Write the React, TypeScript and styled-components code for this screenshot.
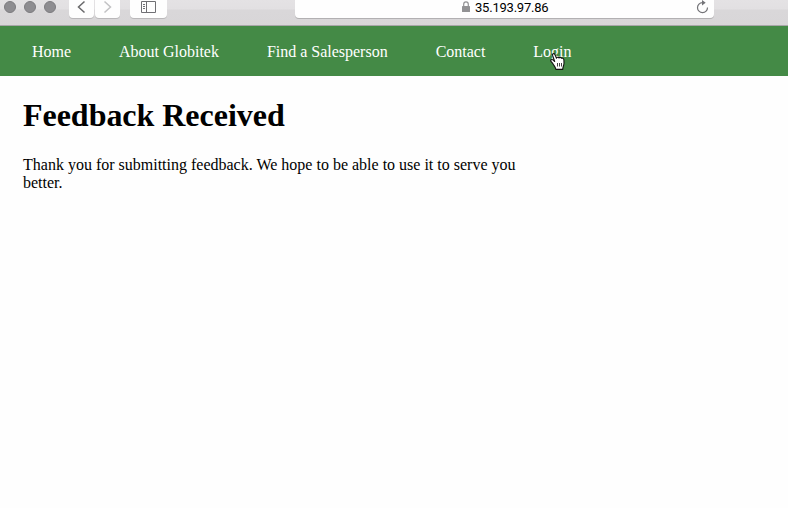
import React from "react";
import styled, { createGlobalStyle } from "styled-components";

const GlobalStyle = createGlobalStyle`
  * { box-sizing: border-box; }
  html, body { margin: 0; background: #fefefe; overflow: hidden; }
`;

const Page = styled.div`
  height: 508px;
  overflow: hidden;
  background: #fefefe;
  color: #000;
  font: 16px/18px "Liberation Serif", "Times New Roman", serif;
`;

const Toolbar = styled.header`
  display: flex;
  align-items: flex-start;
  height: 26px;
  padding-left: 4px;
  background: linear-gradient(#e4e2e4 0, #e2e0e2 9px, #d9d7d9 10px, #d8d6d8 100%);
  border-bottom: 1px solid #a8a6a8;
`;

const WindowButtons = styled.div`
  display: flex;
  gap: 8px;
  padding-top: 1px;
  margin-right: 13px;
`;

const WindowButton = styled.span`
  width: 12px;
  height: 12px;
  border-radius: 50%;
  background: #8e8d91;
  border: 1px solid #7c7b7f;
`;

const ToolButton = styled.button<{ $width: number; $gap: number }>`
  display: block;
  width: ${(p) => p.$width}px;
  height: 18px;
  margin: 0 ${(p) => p.$gap}px 0 0;
  padding: 0;
  border: 0;
  border-radius: 0 0 4px 4px;
  background: #fefefe;
  box-shadow: 0 1px 0 #bab8ba;
  svg { display: block; }
`;

const AddressBar = styled.div`
  display: flex;
  width: 419px;
  height: 18px;
  padding-left: 166px;
  border-radius: 0 0 4px 4px;
  background: #fefefe;
  box-shadow: 0 1px 0 #b2b0b2;
  svg { display: block; flex: none; }
`;

const Address = styled.span`
  width: 73px;
  margin: 0 148px 0 4px;
  white-space: nowrap;
  font: 13px/15px Roboto, "Liberation Sans", sans-serif;
  letter-spacing: -0.22px;
`;

const Nav = styled.nav`
  display: flex;
  gap: 48px;
  height: 50px;
  padding: 17px 32px 0;
  background: #448a46;
  letter-spacing: -0.01px;
`;

const NavLink = styled.a`
  position: relative;
  color: #fff;
  white-space: nowrap;
`;

const Pointer = styled.svg`
  position: absolute;
  left: 17px;
  top: 9px;
`;

const Content = styled.main`
  width: 523px;
  padding: 21px 0 0 23px;
`;

const Title = styled.h1`
  margin: 0 0 22px;
  font-size: 32px;
  line-height: 37px;
  font-weight: 700;
  letter-spacing: -0.03px;
`;

const Message = styled.p`
  margin: 0;
`;

const links = ["Home", "About Globitek", "Find a Salesperson", "Contact", "Login"];

const HandPointer = () => (
  <Pointer width="16" height="19" viewBox="0 0 16 19">
    <path
      d="M4.7 9.5 2.6 3.4C2.1 1.7 4.1 1 4.9 2.5L6.5 6.2C6.8 5.1 8.4 5 9 6 9.7 5.1 11 5.2 11.5 6.3 12.7 5.8 13.8 6.5 13.9 7.9L14 11.2C13.9 13.4 12.9 14.6 12.7 17.4H5.9C5.6 15 3.9 13.5 2.9 11.7L1 9.4C.1 8 1.9 6.9 2.9 7.9Z"
      fill="#fff"
      stroke="#111"
      strokeWidth="1.1"
      strokeLinejoin="round"
    />
    <path d="M7.5 11v3.5M9.5 11v3.5M11.5 11v3.5" stroke="#111" strokeWidth=".8" />
  </Pointer>
);

export default function App() {
  return (
    <Page>
      <GlobalStyle />
      <Toolbar>
        <WindowButtons>
          <WindowButton />
          <WindowButton />
          <WindowButton />
        </WindowButtons>
        <ToolButton $width={25} $gap={1} aria-label="Back">
          <svg width="25" height="18" fill="none" stroke="#69696b" strokeWidth="1.5">
            <path d="M15.5 1.5 9.5 7l6 5.5" />
          </svg>
        </ToolButton>
        <ToolButton $width={25} $gap={10} aria-label="Forward">
          <svg width="25" height="18" fill="none" stroke="#c2c2c4" strokeWidth="1.5">
            <path d="M9.5 1.5 15.5 7l-6 5.5" />
          </svg>
        </ToolButton>
        <ToolButton $width={37} $gap={128} aria-label="Sidebar">
          <svg width="37" height="18" fill="none" stroke="#707074">
            <path d="M11.5 1.5h14v11h-14zM16.5 1.5v11M13 4.5h2M13 6.5h2M13 8.5h2" />
          </svg>
        </ToolButton>
        <AddressBar>
          <svg width="10" height="14">
            <rect x="1" y="6" width="8" height="6" rx=".6" fill="#929294" />
            <path d="M2.7 6V4.2a2.3 2.3 0 0 1 4.6 0V6" fill="none" stroke="#929294" strokeWidth="1.2" />
          </svg>
          <Address>35.193.97.86</Address>
          <svg width="14" height="15" fill="none" stroke="#737377" strokeWidth="1.2">
            <path d="M6.5 2.6A5 5 0 1 0 11.5 7.5" />
            <path d="M6 0 9.7 2.8 6 5.4Z" fill="#737377" stroke="none" />
          </svg>
        </AddressBar>
      </Toolbar>
      <Nav>
        {links.map((label) => (
          <NavLink key={label}>
            {label}
            {label === "Login" && <HandPointer />}
          </NavLink>
        ))}
      </Nav>
      <Content>
        <Title>Feedback Received</Title>
        <Message>Thank you for submitting feedback. We hope to be able to use it to serve you better.</Message>
      </Content>
    </Page>
  );
}
